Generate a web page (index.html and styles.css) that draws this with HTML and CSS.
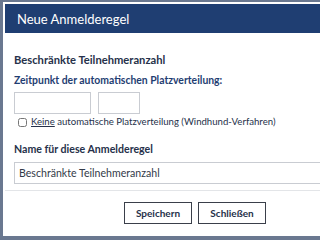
FILE: index.html
```html
<!DOCTYPE html>
<html>
<head>
<meta charset="utf-8">
<link rel="stylesheet" href="styles.css">
</head>
<body>
<div class="dialog">
  <div class="header">Neue Anmelderegel</div>
  <div class="content">
    <h2 class="rule-type">Beschränkte Teilnehmeranzahl</h2>
    <label class="field-label">Zeitpunkt der automatischen Platzverteilung:</label>
    <div class="date-row">
      <input class="date" type="text">
      <input class="time" type="text">
    </div>
    <label class="check-row"><input type="checkbox" class="check"><span><u>Keine</u> automatische Platzverteilung (Windhund-Verfahren)</span></label>
    <label class="field-label name-label">Name für diese Anmelderegel</label>
    <input class="name" type="text" value="Beschränkte Teilnehmeranzahl">
  </div>
  <div class="footer">
    <button class="btn">Speichern</button>
    <button class="btn">Schließen</button>
  </div>
</div>
</body>
</html>
```
FILE: styles.css
```css
html, body {
  margin: 0;
  padding: 0;
  width: 320px;
  height: 240px;
  overflow: hidden;
  background: #6a7890;
  font-family: Lato, "Liberation Sans", sans-serif;
}
.dialog {
  margin: 2px 0 0 3px;
  width: 340px;
  height: 234px;
  background: #fff;
  padding: 2px 0 0 2px;
  box-sizing: border-box;
  display: flex;
  flex-direction: column;
}
.header {
  background: #1f3e72;
  color: #fff;
  height: 29px;
  font-size: 13px;
  line-height: 30px;
  padding-left: 12px;
}
.content {
  padding: 0 0 0 9px;
  display: flex;
  flex-direction: column;
}
.rule-type {
  margin: 20px 0 0;
  font-size: 11.2px;
  font-weight: bold;
  color: #26314a;
  line-height: 14px;
}
.field-label {
  margin-top: 7px;
  font-size: 10.4px;
  font-weight: bold;
  color: #1f3e72;
  line-height: 13px;
}
.date-row {
  display: flex;
  gap: 7px;
  margin-top: 5px;
}
.date-row input, .name {
  border: 1px solid #c9ccd2;
  height: 22px;
  box-sizing: border-box;
  margin: 0;
  padding: 0 4px;
  font-family: Lato, "Liberation Sans", sans-serif;
  font-size: 10.6px;
  color: #333a48;
}
.date { width: 77px; }
.time { width: 42px; }
.check-row {
  display: flex;
  align-items: center;
  margin-top: 2px;
  font-size: 9.6px;
  color: #26314a;
  line-height: 12px;
}
.check {
  margin: 0 4px 0 4px;
  width: 9px;
  height: 9px;
}
.name-label {
  margin-top: 15px;
  font-size: 10.6px;
  color: #26314a;
}
.name {
  margin-top: 6px;
  width: 320px;
}
.footer {
  margin-top: 6px;
  border-top: 1px solid #e3e5e8;
  display: flex;
  gap: 6px;
  padding: 11px 0 0 119px;
}
.btn {
  width: 68px;
  height: 22px;
  border: 1px solid #3a3f4a;
  background: #fff;
  font-family: Lato, "Liberation Sans", sans-serif;
  font-weight: bold;
  font-size: 10px;
  color: #26314a;
  padding: 0;
}
```
